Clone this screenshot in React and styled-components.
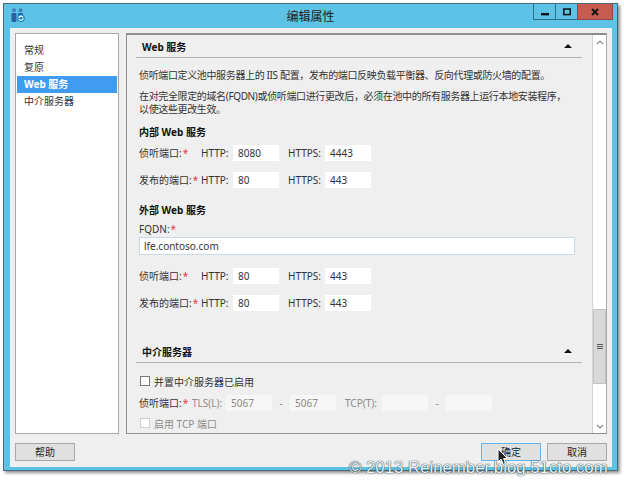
import styled, { createGlobalStyle } from "styled-components";

const FONT = `"Noto Sans", "Noto Sans CJK SC", sans-serif`;

const GlobalStyle = createGlobalStyle`
  html, body {
    margin: 0;
    padding: 0;
    background: #fff;
  }
  body {
    width: 624px;
    height: 480px;
    overflow: hidden;
    font-family: ${FONT};
    font-size: 10px;
    color: #333;
  }
  * {
    box-sizing: border-box;
  }
`;

const App = () => {
  return (
    <Page>
      <GlobalStyle />
      <Win>
        <TitleBar>
          <AppIcon viewBox="0 0 14 14">
            <circle cx="3" cy="2.2" r="2" fill="#4a7fbe" />
            <circle cx="9.5" cy="2.2" r="2" fill="#4a7fbe" />
            <rect x="0.5" y="5" width="5" height="9" rx="1" fill="#2b5f9e" />
            <rect x="7" y="5" width="5" height="4" rx="1" fill="#2b5f9e" />
            <circle cx="10" cy="10.2" r="3.8" fill="#1e88c8" />
            <path d="M7.8 10.2 A2.2 2.2 0 0 1 12 9.4 M12.2 10.2 A2.2 2.2 0 0 1 8 11" fill="none" stroke="#fff" strokeWidth="1.1" />
          </AppIcon>
          <Title>编辑属性</Title>
          <Controls>
            <CtrlBtn>
              <svg width="8" height="8" viewBox="0 0 8 8"><rect x="0" y="5" width="8" height="2.4" fill="#111" /></svg>
            </CtrlBtn>
            <CtrlBtn>
              <svg width="8" height="8" viewBox="0 0 8 8"><rect x="0.8" y="1" width="6.4" height="5.6" fill="none" stroke="#111" strokeWidth="1.5" /></svg>
            </CtrlBtn>
            <CloseBtn>
              <svg width="8" height="8" viewBox="0 0 8 8"><path d="M1 1 L7 7 M7 1 L1 7" stroke="#111" strokeWidth="1.8" /></svg>
            </CloseBtn>
          </Controls>
        </TitleBar>
        <Client>
          <Main>
            <Nav>
              <NavItem>常规</NavItem>
              <NavItem>复原</NavItem>
              <NavItem $active>Web 服务</NavItem>
              <NavItem>中介服务器</NavItem>
            </Nav>
            <Panel>
              <Content>
                <SectionHead>
                  <SectionTitle>Web 服务</SectionTitle>
                  <Caret />
                </SectionHead>
                <Para $top={11}>侦听端口定义池中服务器上的 IIS 配置，发布的端口反映负载平衡器、反向代理或防火墙的配置。</Para>
                <Para $top={8}>在对完全限定的域名(FQDN)或侦听端口进行更改后，必须在池中的所有服务器上运行本地安装程序，<br />以使这些更改生效。</Para>
                <GroupTitle $top={10}>内部 Web 服务</GroupTitle>
                <PortRow $top={6}>
                  <PortLabel>侦听端口:<Star>*</Star></PortLabel>
                  <FieldLabel $w={32}>HTTP:</FieldLabel>
                  <PortInput value="8080" />
                  <FieldLabel $w={37} $left={9}>HTTPS:</FieldLabel>
                  <PortInput value="4443" />
                </PortRow>
                <PortRow $top={11}>
                  <PortLabel>发布的端口:<Star>*</Star></PortLabel>
                  <FieldLabel $w={32}>HTTP:</FieldLabel>
                  <PortInput value="80" />
                  <FieldLabel $w={37} $left={9}>HTTPS:</FieldLabel>
                  <PortInput value="443" />
                </PortRow>
                <GroupTitle $top={16}>外部 Web 服务</GroupTitle>
                <PortLabel $top={6}>FQDN:<Star>*</Star></PortLabel>
                <FqdnInput>lfe.contoso.com</FqdnInput>
                <PortRow $top={13}>
                  <PortLabel>侦听端口:<Star>*</Star></PortLabel>
                  <FieldLabel $w={32}>HTTP:</FieldLabel>
                  <PortInput value="80" />
                  <FieldLabel $w={37} $left={9}>HTTPS:</FieldLabel>
                  <PortInput value="443" />
                </PortRow>
                <PortRow $top={11}>
                  <PortLabel>发布的端口:<Star>*</Star></PortLabel>
                  <FieldLabel $w={32}>HTTP:</FieldLabel>
                  <PortInput value="80" />
                  <FieldLabel $w={37} $left={9}>HTTPS:</FieldLabel>
                  <PortInput value="443" />
                </PortRow>
                <SectionHead $top={29}>
                  <SectionTitle>中介服务器</SectionTitle>
                  <Caret />
                </SectionHead>
                <CheckRow $top={12}>
                  <CheckBox />
                  并置中介服务器已启用
                </CheckRow>
                <PortRow $top={8}>
                  <PortLabel $narrow>侦听端口:<Star>*</Star></PortLabel>
                  <FieldLabel $w={34} $muted>TLS(L):</FieldLabel>
                  <PortInput value="5067" $off />
                  <Dash>-</Dash>
                  <PortInput value="5067" $off />
                  <FieldLabel $w={37} $left={9} $muted>TCP(T):</FieldLabel>
                  <PortInput $off />
                  <Dash>-</Dash>
                  <PortInput $off />
                </PortRow>
                <CheckRow $top={6} $off>
                  <CheckBox $off />
                  启用 TCP 端口
                </CheckRow>
              </Content>
              <ScrollBar>
                <ScrollArrow>
                  <svg width="8" height="5" viewBox="0 0 8 5"><path d="M1 4 L4 1 L7 4" fill="none" stroke="#8a8a8a" strokeWidth="1.2" /></svg>
                </ScrollArrow>
                <ScrollTrack>
                  <ScrollThumb>
                    <Grip /><Grip /><Grip />
                  </ScrollThumb>
                </ScrollTrack>
                <ScrollArrow>
                  <svg width="8" height="5" viewBox="0 0 8 5"><path d="M1 1 L4 4 L7 1" fill="none" stroke="#8a8a8a" strokeWidth="1.2" /></svg>
                </ScrollArrow>
              </ScrollBar>
            </Panel>
          </Main>
          <Footer>
            <Btn>帮助</Btn>
            <FooterRight>
              <Btn $primary>确定</Btn>
              <Btn>取消</Btn>
            </FooterRight>
          </Footer>
        </Client>
      </Win>
      <Cursor viewBox="0 0 12 18">
        <path d="M1 1 L1 14 L4 11 L6.5 16.5 L9 15.5 L6.5 10.5 L10.5 10.5 Z" fill="#222" stroke="#fff" strokeWidth="1" />
      </Cursor>
      <Watermark>© 2013 Reinember.blog.51cto.com</Watermark>
    </Page>
  );
};

export default App;

const Page = styled.div`
  position: relative;
  width: 624px;
  height: 480px;
  padding: 3px 0 0 3px;
`;

const Win = styled.div`
  width: 615px;
  height: 468px;
  background: #5cc3e6;
  border: 1px solid #4a6a78;
  box-shadow: 2px 2px 3px rgba(0, 0, 0, 0.45);
  display: flex;
  flex-direction: column;
`;

const TitleBar = styled.div`
  position: relative;
  height: 24px;
  flex: none;
  display: flex;
  align-items: center;
  justify-content: center;
`;

const AppIcon = styled.svg`
  position: absolute;
  left: 7px;
  top: 4px;
  width: 14px;
  height: 14px;
`;

const Title = styled.div`
  font-size: 12px;
  color: #222;
`;

const Controls = styled.div`
  position: absolute;
  right: 4px;
  top: 0;
  display: flex;
`;

const CtrlBtn = styled.div`
  width: 23px;
  height: 16px;
  display: flex;
  align-items: center;
  justify-content: center;
  border: 1px solid #2f6f88;
  border-top: none;
  margin-right: -1px;
`;

const CloseBtn = styled(CtrlBtn)`
  width: 36px;
  margin-right: 0;
  background: #c75b50;
  border-color: #8f4a44;
`;

const Client = styled.div`
  flex: 1;
  margin: 0 5px 3px 6px;
  background: #efefef;
  padding: 5px 5px 0 5px;
  display: flex;
  flex-direction: column;
`;

const Main = styled.div`
  height: 401px;
  display: flex;
  gap: 7px;
`;

const Nav = styled.div`
  width: 104px;
  flex: none;
  background: #fff;
  border: 1px solid #a8a8a8;
  padding: 8px 1px;
`;

const NavItem = styled.div`
  height: 17px;
  line-height: 17px;
  padding-left: 7px;
  font-size: 10px;
  color: ${(p) => (p.$active ? "#fff" : "#333")};
  background: ${(p) => (p.$active ? "#3f9cf0" : "transparent")};
  font-weight: ${(p) => (p.$active ? 700 : 400)};
`;

const Panel = styled.div`
  flex: 1;
  min-width: 0;
  display: flex;
  border: 1px solid #8e8e8e;
  border-top-width: 2px;
  border-right-color: #a8a8a8;
  overflow: hidden;
`;

const Content = styled.div`
  flex: 1;
  min-width: 0;
  padding: 0 10px 0 12px;
`;

const SectionHead = styled.div`
  height: 23px;
  margin: ${(p) => p.$top || 0}px 0 0 -3px;
  padding: 0 10px 0 6px;
  border-bottom: 1px solid #b4b4b4;
  display: flex;
  align-items: center;
  justify-content: space-between;
`;

const SectionTitle = styled.div`
  font-size: 10px;
  font-weight: 700;
  color: #111;
`;

const Caret = styled.div`
  width: 0;
  height: 0;
  border-left: 4px solid transparent;
  border-right: 4px solid transparent;
  border-bottom: 4px solid #111;
`;

const Para = styled.div`
  margin-top: ${(p) => p.$top}px;
  font-size: 10px;
  line-height: 13px;
  letter-spacing: -0.36px;
  white-space: nowrap;
`;

const GroupTitle = styled.div`
  margin-top: ${(p) => p.$top}px;
  font-size: 10px;
  line-height: 13px;
  font-weight: 700;
  color: #111;
`;

const PortRow = styled.div`
  margin-top: ${(p) => p.$top}px;
  display: flex;
  align-items: center;
  height: 16px;
  white-space: nowrap;
`;

const PortLabel = styled.div`
  width: ${(p) => (p.$top ? "auto" : p.$narrow ? "53px" : "62px")};
  margin-top: ${(p) => p.$top || 0}px;
  flex: none;
  font-size: 10px;
  line-height: 13px;
`;

const Star = styled.span`
  color: #e03a4a;
  margin-left: 1px;
`;

const FieldLabel = styled.div`
  width: ${(p) => p.$w}px;
  margin-left: ${(p) => p.$left || 0}px;
  flex: none;
  font-size: 10px;
  color: ${(p) => (p.$muted ? "#8c8c8c" : "#333")};
`;

const PortInput = styled.div.attrs((p) => ({ children: p.value }))`
  width: 46px;
  height: 16px;
  flex: none;
  line-height: 16px;
  padding-left: 5px;
  font-size: 10px;
  background: ${(p) => (p.$off ? "#f6f6f6" : "#fff")};
  color: ${(p) => (p.$off ? "#8c8c8c" : "#333")};
`;

const FqdnInput = styled.div`
  height: 18px;
  width: 436px;
  margin-top: 1px;
  line-height: 16px;
  padding-left: 4px;
  font-size: 10px;
  background: #fff;
  border: 1px solid #c8d8e8;
`;

const CheckRow = styled.div`
  margin-top: ${(p) => p.$top}px;
  height: 12px;
  padding-left: 1px;
  display: flex;
  align-items: center;
  gap: 4px;
  font-size: 10px;
  color: ${(p) => (p.$off ? "#8c8c8c" : "#333")};
`;

const CheckBox = styled.span`
  width: 10px;
  height: 10px;
  background: #fff;
  border: 1px solid ${(p) => (p.$off ? "#cfcfcf" : "#777")};
`;

const Dash = styled.div`
  width: 18px;
  flex: none;
  text-align: center;
  color: #8c8c8c;
  font-size: 10px;
`;

const ScrollBar = styled.div`
  width: 14px;
  flex: none;
  background: #fff;
  border-left: 1px solid #d4d4d4;
  display: flex;
  flex-direction: column;
`;

const ScrollArrow = styled.div`
  height: 14px;
  flex: none;
  display: flex;
  align-items: center;
  justify-content: center;
`;

const ScrollTrack = styled.div`
  flex: 1;
  display: flex;
  flex-direction: column;
  justify-content: flex-end;
  padding-bottom: 35px;
`;

const ScrollThumb = styled.div`
  height: 75px;
  background: #d8d8d8;
  border: 1px solid #c4c4c4;
  display: flex;
  flex-direction: column;
  align-items: center;
  justify-content: center;
  gap: 1px;
`;

const Grip = styled.span`
  width: 6px;
  height: 1px;
  background: #555;
`;

const Footer = styled.div`
  flex: 1;
  display: flex;
  justify-content: space-between;
  padding-top: 9px;
`;

const FooterRight = styled.div`
  display: flex;
  gap: 6px;
  padding-right: 0;
`;

const Btn = styled.div`
  width: 60px;
  height: 18px;
  line-height: 16px;
  text-align: center;
  font-size: 10px;
  color: #222;
  background: #e0e0e0;
  border: 1px solid ${(p) => (p.$primary ? "#67b3ec" : "#a8a8a8")};
`;

const Cursor = styled.svg`
  position: absolute;
  left: 497px;
  top: 448px;
  width: 12px;
  height: 18px;
`;

const Watermark = styled.div`
  position: absolute;
  left: 349px;
  top: 458px;
  font-family: "Liberation Sans", sans-serif;
  font-size: 16.8px;
  line-height: 20px;
  white-space: nowrap;
  color: #e8f2f6;
  text-shadow: 0 0 1px #33424a, 0 0 1px #33424a;
`;
